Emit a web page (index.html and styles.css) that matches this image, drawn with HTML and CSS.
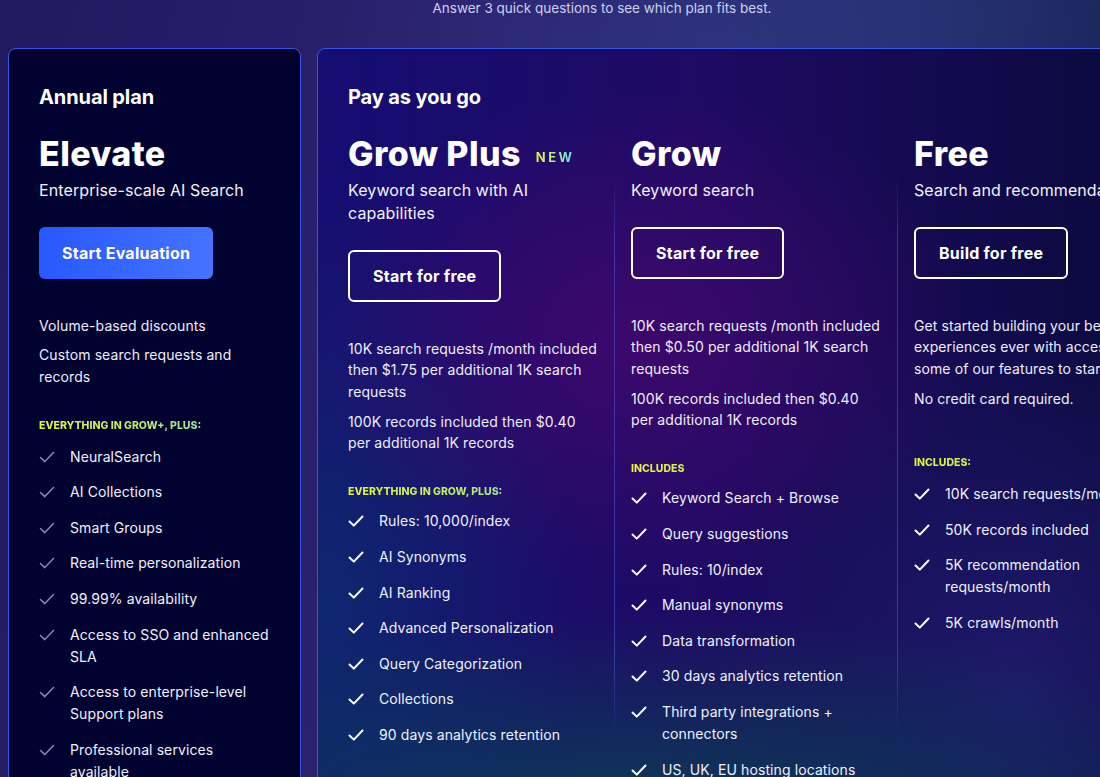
FILE: index.html
```html
<!DOCTYPE html>
<html lang="en">
<head>
<meta charset="utf-8">
<title>Pricing</title>
<link rel="stylesheet" href="styles.css">
</head>
<body>
<div class="intro">Answer 3 quick questions to see which plan fits best.</div>
<div class="plans">
  <section class="card annual">
    <div class="kicker">Annual plan</div>
    <h2 class="plan-name">Elevate</h2>
    <div class="tagline">Enterprise-scale AI Search</div>
    <div class="cta"><a class="btn btn-primary">Start Evaluation</a></div>
    <div class="details">
      <p>Volume-based discounts</p>
      <p>Custom search requests and records</p>
    </div>
    <div class="label">EVERYTHING IN GROW+, PLUS:</div>
    <ul class="features muted">
      <li><svg viewBox="0 0 16 22"><path d="M1.5 11.5 L5.8 15.6 L14.5 6.5"/></svg><span>NeuralSearch</span></li>
      <li><svg viewBox="0 0 16 22"><path d="M1.5 11.5 L5.8 15.6 L14.5 6.5"/></svg><span>AI Collections</span></li>
      <li><svg viewBox="0 0 16 22"><path d="M1.5 11.5 L5.8 15.6 L14.5 6.5"/></svg><span>Smart Groups</span></li>
      <li><svg viewBox="0 0 16 22"><path d="M1.5 11.5 L5.8 15.6 L14.5 6.5"/></svg><span>Real-time personalization</span></li>
      <li><svg viewBox="0 0 16 22"><path d="M1.5 11.5 L5.8 15.6 L14.5 6.5"/></svg><span>99.99% availability</span></li>
      <li><svg viewBox="0 0 16 22"><path d="M1.5 11.5 L5.8 15.6 L14.5 6.5"/></svg><span>Access to SSO and enhanced SLA</span></li>
      <li><svg viewBox="0 0 16 22"><path d="M1.5 11.5 L5.8 15.6 L14.5 6.5"/></svg><span>Access to enterprise-level Support plans</span></li>
      <li><svg viewBox="0 0 16 22"><path d="M1.5 11.5 L5.8 15.6 L14.5 6.5"/></svg><span>Professional services available</span></li>
    </ul>
  </section>

  <section class="card payg">
    <div class="kicker">Pay as you go</div>
    <div class="columns">
      <div class="col">
        <h2 class="plan-name">Grow Plus <span class="new">NEW</span></h2>
        <div class="tagline">Keyword search with AI capabilities</div>
        <div class="cta"><a class="btn btn-outline">Start for free</a></div>
        <div class="details">
          <p>10K search requests /month included then $1.75 per additional 1K search requests</p>
          <p>100K records included then $0.40 per additional 1K records</p>
        </div>
        <div class="label">EVERYTHING IN GROW, PLUS:</div>
        <ul class="features">
          <li><svg viewBox="0 0 16 22"><path d="M1.5 11.5 L5.8 15.6 L14.5 6.5"/></svg><span>Rules: 10,000/index</span></li>
          <li><svg viewBox="0 0 16 22"><path d="M1.5 11.5 L5.8 15.6 L14.5 6.5"/></svg><span>AI Synonyms</span></li>
          <li><svg viewBox="0 0 16 22"><path d="M1.5 11.5 L5.8 15.6 L14.5 6.5"/></svg><span>AI Ranking</span></li>
          <li><svg viewBox="0 0 16 22"><path d="M1.5 11.5 L5.8 15.6 L14.5 6.5"/></svg><span>Advanced Personalization</span></li>
          <li><svg viewBox="0 0 16 22"><path d="M1.5 11.5 L5.8 15.6 L14.5 6.5"/></svg><span>Query Categorization</span></li>
          <li><svg viewBox="0 0 16 22"><path d="M1.5 11.5 L5.8 15.6 L14.5 6.5"/></svg><span>Collections</span></li>
          <li><svg viewBox="0 0 16 22"><path d="M1.5 11.5 L5.8 15.6 L14.5 6.5"/></svg><span>90 days analytics retention</span></li>
        </ul>
      </div>
      <div class="divider"></div>
      <div class="col">
        <h2 class="plan-name">Grow</h2>
        <div class="tagline">Keyword search</div>
        <div class="cta"><a class="btn btn-outline">Start for free</a></div>
        <div class="details">
          <p>10K search requests /month included then $0.50 per additional 1K search requests</p>
          <p>100K records included then $0.40 per additional 1K records</p>
        </div>
        <div class="label">INCLUDES</div>
        <ul class="features">
          <li><svg viewBox="0 0 16 22"><path d="M1.5 11.5 L5.8 15.6 L14.5 6.5"/></svg><span>Keyword Search + Browse</span></li>
          <li><svg viewBox="0 0 16 22"><path d="M1.5 11.5 L5.8 15.6 L14.5 6.5"/></svg><span>Query suggestions</span></li>
          <li><svg viewBox="0 0 16 22"><path d="M1.5 11.5 L5.8 15.6 L14.5 6.5"/></svg><span>Rules: 10/index</span></li>
          <li><svg viewBox="0 0 16 22"><path d="M1.5 11.5 L5.8 15.6 L14.5 6.5"/></svg><span>Manual synonyms</span></li>
          <li><svg viewBox="0 0 16 22"><path d="M1.5 11.5 L5.8 15.6 L14.5 6.5"/></svg><span>Data transformation</span></li>
          <li><svg viewBox="0 0 16 22"><path d="M1.5 11.5 L5.8 15.6 L14.5 6.5"/></svg><span>30 days analytics retention</span></li>
          <li><svg viewBox="0 0 16 22"><path d="M1.5 11.5 L5.8 15.6 L14.5 6.5"/></svg><span>Third party integrations + connectors</span></li>
          <li><svg viewBox="0 0 16 22"><path d="M1.5 11.5 L5.8 15.6 L14.5 6.5"/></svg><span>US, UK, EU hosting locations</span></li>
        </ul>
      </div>
      <div class="divider"></div>
      <div class="col free">
        <h2 class="plan-name">Free</h2>
        <div class="tagline">Search and recommendations</div>
        <div class="cta"><a class="btn btn-outline">Build for free</a></div>
        <div class="details">
          <p>Get started building your best search experiences ever with access to some of our features to start.</p>
          <p>No credit card required.</p>
        </div>
        <div class="label">INCLUDES:</div>
        <ul class="features">
          <li><svg viewBox="0 0 16 22"><path d="M1.5 11.5 L5.8 15.6 L14.5 6.5"/></svg><span>10K search requests/month</span></li>
          <li><svg viewBox="0 0 16 22"><path d="M1.5 11.5 L5.8 15.6 L14.5 6.5"/></svg><span>50K records included</span></li>
          <li><svg viewBox="0 0 16 22"><path d="M1.5 11.5 L5.8 15.6 L14.5 6.5"/></svg><span>5K recommendation requests/month</span></li>
          <li><svg viewBox="0 0 16 22"><path d="M1.5 11.5 L5.8 15.6 L14.5 6.5"/></svg><span>5K crawls/month</span></li>
        </ul>
      </div>
    </div>
  </section>
</div>
</body>
</html>
```
FILE: styles.css
```css
* { box-sizing: border-box; margin: 0; padding: 0; }

body {
  width: 1100px;
  height: 777px;
  overflow: hidden;
  font-family: Inter, "Noto Sans", sans-serif;
  color: #fff;
  background:
    radial-gradient(ellipse 420px 220px at 720px 40px, rgba(52, 58, 140, 0.55), rgba(52, 58, 140, 0)),
    linear-gradient(105deg, #231960 0%, #2b2170 40%, #222f6c 70%, #141d4c 100%);
}

.intro {
  height: 16px;
  padding-left: 104px;
  text-align: center;
  font-size: 13.5px;
  line-height: 16px;
  color: #cfd0ea;
}

.plans {
  display: flex;
  align-items: flex-start;
  gap: 16px;
  padding: 32px 0 0 8px;
}

.card {
  flex: none;
  border: 1px solid #3658e2;
  border-radius: 8px;
  padding: 36px 30px 60px;
}

.annual {
  width: 293px;
  background: #020230;
}

.payg {
  width: 900px;
  background:
    radial-gradient(ellipse 340px 250px at 320px 290px, rgba(66, 8, 108, 0.85), rgba(66, 8, 108, 0)),
    radial-gradient(ellipse 620px 230px at 330px 790px, rgba(8, 68, 84, 0.95), rgba(8, 68, 84, 0)),
    radial-gradient(ellipse 320px 380px at 700px 640px, rgba(32, 28, 112, 0.85), rgba(32, 28, 112, 0)),
    radial-gradient(ellipse 260px 420px at 0px 560px, rgba(14, 44, 110, 0.85), rgba(14, 44, 110, 0)),
    linear-gradient(90deg, #150d72 0%, #1f0a64 42%, #0d0a42 85%);
}

.kicker {
  font-size: 20px;
  line-height: 24px;
  font-weight: 700;
  letter-spacing: -0.1px;
}

.plan-name {
  display: flex;
  align-items: baseline;
  gap: 15px;
  margin-top: 25px;
  font-size: 34px;
  line-height: 40px;
  font-weight: 800;
  letter-spacing: 0.4px;
}

.columns .plan-name { margin-top: 0; }

.new {
  font-size: 13px;
  line-height: 1;
  font-weight: 700;
  letter-spacing: 2.4px;
  position: relative;
  top: -4px;
  background: linear-gradient(90deg, #eaf53a, #70e2ea);
  -webkit-background-clip: text;
  background-clip: text;
  color: transparent;
}

.tagline {
  margin-top: 5px;
  font-size: 16px;
  line-height: 23px;
  letter-spacing: 0.1px;
  color: #f2f2fb;
}

.cta { margin-top: 25px; }

.btn {
  display: inline-flex;
  align-items: center;
  height: 52px;
  padding: 0 23px;
  border-radius: 6px;
  font-size: 16px;
  font-weight: 700;
  letter-spacing: 0.25px;
  color: #fff;
}

.btn-primary {
  background: linear-gradient(100deg, #2758ff, #4673ff);
}

.btn-outline {
  border: 2px solid #fff;
}

.details { margin-top: 35.5px; }

.details p {
  font-size: 14px;
  line-height: 21.6px;
  letter-spacing: 0.1px;
  color: #eeeef8;
}

.details p + p { margin-top: 8.4px; }

.label {
  margin-top: 31px;
  font-size: 10.5px;
  line-height: 14px;
  font-weight: 800;
  background: linear-gradient(90deg, #e6f53c 0%, #c0f060 40%, #6fe0ee 100%);
  -webkit-background-clip: text;
  background-clip: text;
  color: transparent;
}

.free .label { margin-top: 47px; }

.features {
  list-style: none;
  margin-top: 13px;
  display: flex;
  flex-direction: column;
  gap: 13.6px;
}

.col .features { margin-top: 11.5px; }

.free .features { margin-top: 13px; }

.features li {
  display: flex;
  gap: 15px;
  font-size: 14px;
  line-height: 22px;
  letter-spacing: 0.1px;
  color: #f0f0fa;
}

.features svg {
  flex: none;
  width: 16px;
  height: 22px;
  fill: none;
  stroke: #fff;
  stroke-width: 2;
  stroke-linecap: round;
  stroke-linejoin: round;
}

.features.muted svg {
  stroke: #8a88b4;
  stroke-width: 1.5;
}

.columns {
  display: flex;
  margin-top: 25px;
}

.col {
  flex: none;
  width: 250px;
}

.divider {
  flex: none;
  width: 1px;
  height: 560px;
  margin: 40px 16px 0;
  background: linear-gradient(180deg, rgba(70, 90, 220, 0), rgba(70, 90, 220, 0.55) 12%, rgba(70, 90, 220, 0.55) 88%, rgba(70, 90, 220, 0));
}
```
